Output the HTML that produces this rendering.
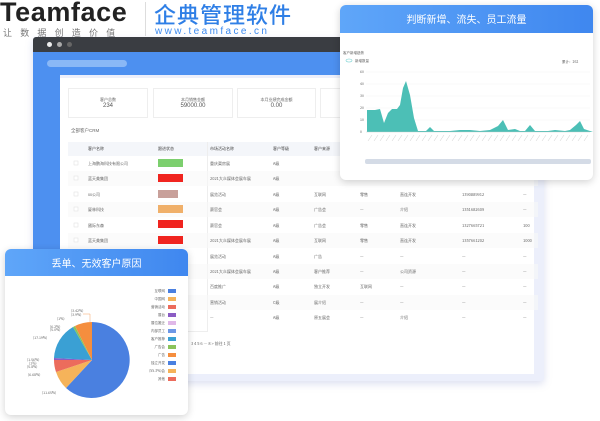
<!DOCTYPE html>
<html><head><meta charset="utf-8"><style>
*{margin:0;padding:0;box-sizing:border-box}
body{width:600px;height:421px;background:#fff;position:relative;overflow:hidden;font-family:"Liberation Sans","Noto Sans CJK SC",sans-serif}
.a{position:absolute}
.t{font-size:4px;color:#666;white-space:nowrap}
</style></head><body>
<!-- logo -->
<div class="a" style="left:0;top:-3px;font-size:27px;font-weight:bold;color:#222;letter-spacing:0.6px">Teamface</div>
<div class="a" style="left:3px;top:26px;font-size:9px;color:#777;letter-spacing:8.2px;font-family:'Noto Sans CJK SC',sans-serif">让数据创造价值</div>
<div class="a" style="left:145px;top:2px;width:1px;height:34px;background:#ddd"></div>
<div class="a" style="left:154px;top:-2px;font-size:22px;color:#2f7fe6;font-family:'Noto Sans CJK SC',sans-serif;font-weight:500;letter-spacing:1px">企典管理软件</div>
<div class="a" style="left:155px;top:26px;font-size:10px;color:#3d8bef;letter-spacing:2.4px">www.teamface.cn</div>

<!-- browser window -->
<div class="a" style="left:33px;top:37px;width:511px;height:344px;background:#eceffb;border-radius:3px;box-shadow:0 3px 8px rgba(120,130,200,.25);overflow:hidden">
 <div class="a" style="left:0;top:0;width:511px;height:15px;background:#3a3d42"></div>
 <div class="a" style="left:14px;top:5px;width:5px;height:5px;border-radius:50%;background:#eee"></div>
 <div class="a" style="left:24px;top:5px;width:5px;height:5px;border-radius:50%;background:#aaa"></div>
 <div class="a" style="left:34px;top:5px;width:5px;height:5px;border-radius:50%;background:#666"></div>
 <div class="a" style="left:0;top:15px;width:511px;height:23px;background:#4d90f0"></div>
 <div class="a" style="left:14px;top:23px;width:80px;height:7px;border-radius:4px;background:#8ab8f6"></div>
 <div class="a" style="left:0;top:38px;width:27px;height:306px;background:#4d90f0"></div>
 <div class="a" style="left:27px;top:41px;width:474px;height:296px;background:#fff"></div>
</div>
<!-- stat cards -->
<div class="a" style="left:68px;top:88px;width:80px;height:30px;border:1px solid #eee;background:#fff"><div class="t" style="text-align:center;margin-top:8px">客户总数</div><div style="text-align:center;font-size:6px;color:#555">234</div></div>
<div class="a" style="left:153px;top:88px;width:80px;height:30px;border:1px solid #eee;background:#fff"><div class="t" style="text-align:center;margin-top:8px">本月销售金额</div><div style="text-align:center;font-size:6px;color:#555">59000.00</div></div>
<div class="a" style="left:237px;top:88px;width:79px;height:30px;border:1px solid #eee;background:#fff"><div class="t" style="text-align:center;margin-top:8px">本月业绩完成金额</div><div style="text-align:center;font-size:6px;color:#555">0.00</div></div>
<div class="a" style="left:320px;top:88px;width:30px;height:30px;border:1px solid #eee;background:#fff"></div>
<div class="a t" style="left:71px;top:128px;font-size:4.5px">全部客户CRM</div>
<!-- table -->
<div class="a" style="left:68px;top:142px;width:470px;height:14px;background:#f4f6fa"></div>
<div class="a t" style="left:88px;top:146px;color:#444">客户名称</div>
<div class="a t" style="left:158px;top:146px;color:#444">跟进状态</div>
<div class="a t" style="left:210px;top:146px;color:#444">市场活动名称</div>
<div class="a t" style="left:273px;top:146px;color:#444">客户等级</div>
<div class="a t" style="left:314px;top:146px;color:#444">客户来源</div>
<div class="a" style="left:207px;top:142px;width:1px;height:190px;background:#eee"></div>
<div class="a" style="left:68px;top:331px;width:140px;height:1px;background:#eee"></div>
<svg class="a" style="left:0;top:0" width="600" height="421">
<g fill="#f8f8f8"><rect x="68" y="171" width="470" height="15" opacity=".6"/><rect x="68" y="202" width="470" height="15" opacity=".6"/><rect x="68" y="233" width="470" height="15" opacity=".6"/><rect x="68" y="264" width="470" height="15" opacity=".6"/><rect x="68" y="295" width="470" height="15" opacity=".6"/></g>
<g fill="#fff" stroke="#ddd" stroke-width=".5">
<rect x="74" y="161" width="4" height="4"/><rect x="74" y="176" width="4" height="4"/><rect x="74" y="192" width="4" height="4"/><rect x="74" y="207" width="4" height="4"/><rect x="74" y="223" width="4" height="4"/><rect x="74" y="238" width="4" height="4"/>
</g>
<rect x="158" y="159" width="25" height="8" fill="#7ccf6e"/>
<rect x="158" y="174" width="25" height="8" fill="#f0241f"/>
<rect x="158" y="190" width="20" height="8" fill="#c8a09a"/>
<rect x="158" y="205" width="25" height="8" fill="#f0b06a"/>
<rect x="158" y="220" width="25" height="8" fill="#f0241f"/>
<rect x="158" y="236" width="25" height="8" fill="#f0241f"/>
<g font-size="4" fill="#666" font-family="Noto Sans CJK SC,sans-serif">
<text x="88" y="165">上海鹏海科技有限公司</text><text x="88" y="180">蓝天美集团</text><text x="88" y="196">xx公司</text><text x="88" y="211">厦林科技</text><text x="88" y="227">國际东森</text><text x="88" y="242">蓝天美集团</text>
<text x="210" y="165">重庆渠房展</text><text x="210" y="180">2021大众媒体会展车展</text><text x="210" y="196">展览活动</text><text x="210" y="211">赛官会</text><text x="210" y="227">赛官会</text><text x="210" y="242">2021大众媒体会展车展</text><text x="210" y="258">展览活动</text><text x="210" y="273">2021大众媒体会展车展</text><text x="210" y="288">百度推广</text><text x="210" y="304">营销活动</text><text x="210" y="319">—</text>
<text x="273" y="165">A级</text><text x="273" y="180">A级</text><text x="273" y="196">A级</text><text x="273" y="211">A级</text><text x="273" y="227">A级</text><text x="273" y="242">A级</text><text x="273" y="258">A级</text><text x="273" y="273">A级</text><text x="273" y="288">A级</text><text x="273" y="304">C级</text><text x="273" y="319">A级</text>
<text x="314" y="196">互联网</text><text x="314" y="211">广告会</text><text x="314" y="227">广告会</text><text x="314" y="242">互联网</text><text x="314" y="258">广告</text><text x="314" y="273">客户推荐</text><text x="314" y="288">独立开发</text><text x="314" y="304">展介绍</text><text x="314" y="319">原五展会</text>
<text x="360" y="196">零售</text><text x="360" y="211">—</text><text x="360" y="227">零售</text><text x="360" y="242">零售</text><text x="360" y="258">—</text><text x="360" y="273">—</text><text x="360" y="288">互联网</text><text x="360" y="304">—</text><text x="360" y="319">—</text>
<text x="400" y="196">直连开发</text><text x="400" y="211">介绍</text><text x="400" y="227">直连开发</text><text x="400" y="242">直连开发</text><text x="400" y="258">—</text><text x="400" y="273">公司资源</text><text x="400" y="288">—</text><text x="400" y="304">—</text><text x="400" y="319">介绍</text>
<text x="462" y="196">1390889912</text><text x="462" y="211">1351682609</text><text x="462" y="227">1327665721</text><text x="462" y="242">1357661202</text><text x="462" y="258">—</text><text x="462" y="273">—</text><text x="462" y="288">—</text><text x="462" y="304">—</text><text x="462" y="319">—</text>
<text x="523" y="196">—</text><text x="523" y="211">—</text><text x="523" y="227">100</text><text x="523" y="242">1000</text><text x="523" y="258">—</text><text x="523" y="273">—</text><text x="523" y="288">—</text><text x="523" y="304">—</text><text x="523" y="319">—</text>
<text x="191" y="345">3    4    5    6    …   8    &gt;      前往   1    页</text>
</g>
</svg>

<!-- right chart card -->
<div class="a" style="left:340px;top:5px;width:253px;height:175px;background:#fff;border-radius:6px;box-shadow:0 2px 8px rgba(0,0,0,.18);overflow:hidden">
 <div style="height:28px;background:linear-gradient(90deg,#5fa6f9,#3f87ef);color:#fff;font-size:10px;text-align:center;line-height:28px;font-family:'Noto Sans CJK SC',sans-serif">判断新增、流失、员工流量</div>
 <svg width="253" height="147" style="display:block">
  <g font-size="3.5" fill="#666" font-family="Noto Sans CJK SC,sans-serif">
   <text x="3" y="21">客户新增趋势</text><text x="15" y="29">新增数量</text><text x="222" y="30">累计：262</text>
   <text x="20" y="40">60</text><text x="20" y="52">40</text><text x="20" y="64">30</text><text x="20" y="76">20</text><text x="20" y="88">10</text><text x="20" y="100">0</text>
  </g>
  <ellipse cx="9" cy="27.5" rx="3" ry="1.5" fill="none" stroke="#6cc" stroke-width=".6"/>
  <g stroke="#f0f0f0" stroke-width=".4"><line x1="26" y1="39" x2="250" y2="39"/><line x1="26" y1="51" x2="250" y2="51"/><line x1="26" y1="63" x2="250" y2="63"/><line x1="26" y1="75" x2="250" y2="75"/><line x1="26" y1="87" x2="250" y2="87"/></g>
  <path d="M27 99 L27 77 L35 77 L40 76 L44 90 L48 80 L52 76 L57 76 L60 72 L63 55 L66 48 L70 62 L74 85 L78 98 L86 98 L90 94 L94 98 L110 98 L120 97 L130 97 L140 98 L150 97 L158 93 L163 87 L168 97 L175 96 L180 98 L185 98 L190 92 L195 98 L208 98 L215 97 L225 98 L230 97 L236 92 L240 88 L244 96 L250 98 L253 99 Z" fill="#4cbfb6"/>
  <line x1="26" y1="99" x2="250" y2="99" stroke="#ccc" stroke-width=".4"/>
  <g stroke="#ccc" stroke-width=".5"><path d="M28 108l4-6M34 108l4-6M40 108l4-6M46 108l4-6M52 108l4-6M58 108l4-6M64 108l4-6M70 108l4-6M76 108l4-6M82 108l4-6M88 108l4-6M94 108l4-6M100 108l4-6M106 108l4-6M112 108l4-6M118 108l4-6M124 108l4-6M130 108l4-6M136 108l4-6M142 108l4-6M148 108l4-6M154 108l4-6M160 108l4-6M166 108l4-6M172 108l4-6M178 108l4-6M184 108l4-6M190 108l4-6M196 108l4-6M202 108l4-6M208 108l4-6M214 108l4-6M220 108l4-6M226 108l4-6M232 108l4-6M238 108l4-6M244 108l4-6"/></g>
  <rect x="25" y="126" width="226" height="5" rx="2" fill="#d4dbe6"/>
 </svg>
</div>

<!-- pie card -->
<div class="a" style="left:5px;top:249px;width:183px;height:166px;background:#fff;border-radius:6px;box-shadow:0 2px 8px rgba(0,0,0,.18);overflow:hidden">
 <div style="height:27px;background:linear-gradient(90deg,#5fa6f9,#3f87ef);color:#fff;font-size:10px;text-align:center;line-height:27px;font-family:'Noto Sans CJK SC',sans-serif">丢单、无效客户原因</div>
 <svg width="183" height="139" style="display:block">
  <g transform="translate(87,84)">
   <path d="M0 0 L0 -38 A38 38 0 1 1 -26 28 Z" fill="#4a80e0"/>
   <path d="M0 0 L-26 28 A38 38 0 0 1 -36 12 Z" fill="#f5b35a"/>
   <path d="M0 0 L-36 12 A38 38 0 0 1 -38 0 Z" fill="#ec6c5c"/>
   <path d="M0 0 L-38 0 A38 38 0 0 1 -38 -2 Z" fill="#8b5cc4"/>
   <path d="M0 0 L-38 -2 A38 38 0 0 1 -19 -33 Z" fill="#3aa0d4"/>
   <path d="M0 0 L-19 -33 A38 38 0 0 1 -17 -34 Z" fill="#8ac35a"/>
   <path d="M0 0 L-17 -34 A38 38 0 0 1 0 -38 Z" fill="#f58e3e"/>
  </g>
  <g stroke="#f58e3e" stroke-width=".4" fill="none"><path d="M85 46 L85 38 L78 38"/></g>
  <g font-size="3.5" fill="#666" font-family="Noto Sans CJK SC,sans-serif">
   <text x="66" y="36">(3.42%)</text><text x="66" y="40">(3.9%)</text><text x="52" y="44">(1%)</text><text x="45" y="52">(6.2%)</text><text x="45" y="55">(5.0%)</text>
   <text x="28" y="63">(17.19%)</text><text x="22" y="85">(1.56%)</text><text x="24" y="88.5">(1%)</text><text x="22" y="92">(5.8%)</text><text x="23" y="100">(6.68%)</text><text x="37" y="118">(11.65%)</text>
  </g>
  <g font-size="3.5" fill="#666" font-family="Noto Sans CJK SC,sans-serif" text-anchor="end">
   <text x="160" y="16">互联网</text><text x="160" y="24">中国网</text><text x="160" y="32">营销活动</text><text x="160" y="40">展台</text><text x="160" y="48">展位搬迁</text><text x="160" y="56">内部员工</text><text x="160" y="64">客户推荐</text><text x="160" y="72">广告会</text><text x="160" y="80">广告</text><text x="160" y="88">独立开发</text><text x="160" y="96">(55.3%)会</text><text x="160" y="104">其他</text>
  </g>
  <rect x="163" y="13" width="8" height="4" fill="#4a80e0"/><rect x="163" y="21" width="8" height="4" fill="#f5b35a"/><rect x="163" y="29" width="8" height="4" fill="#ec6c5c"/><rect x="163" y="37" width="8" height="4" fill="#8b5cc4"/><rect x="163" y="45" width="8" height="4" fill="#e0b8e8"/><rect x="163" y="53" width="8" height="4" fill="#6e98e6"/><rect x="163" y="61" width="8" height="4" fill="#3aa0d4"/><rect x="163" y="69" width="8" height="4" fill="#8ac35a"/><rect x="163" y="77" width="8" height="4" fill="#f58e3e"/><rect x="163" y="85" width="8" height="4" fill="#4a80e0"/><rect x="163" y="93" width="8" height="4" fill="#f5b35a"/><rect x="163" y="101" width="8" height="4" fill="#ec6c5c"/>
 </svg>
</div>
</body></html>
